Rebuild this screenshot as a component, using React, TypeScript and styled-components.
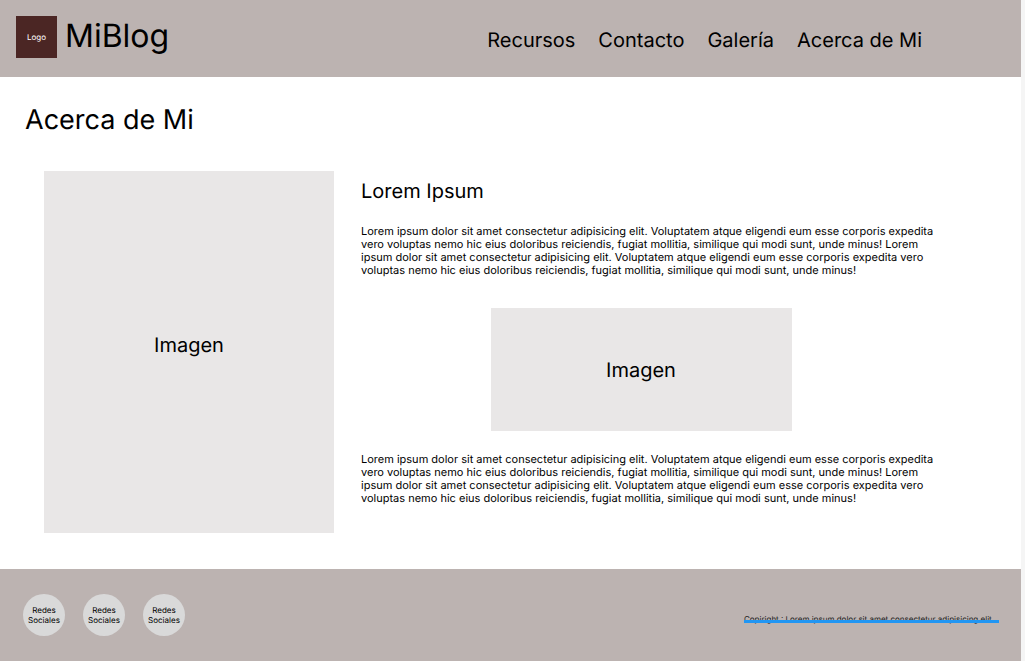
import React from "react";
import styled, { createGlobalStyle } from "styled-components";

const GlobalStyle = createGlobalStyle`
  *, *::before, *::after { box-sizing: border-box; }
  body {
    margin: 0;
    background: #f5f5f5;
    color: #000;
    font-family: Inter, "Liberation Sans", sans-serif;
    text-rendering: geometricPrecision;
  }
  h1, h2, p, ul { margin: 0; padding: 0; font-weight: 400; }
`;

const Page = styled.div`
  display: flex;
  flex-direction: column;
  min-height: 100vh;
  margin-right: 4px;
  background: #fff;
`;

const Header = styled.header`
  display: flex;
  align-items: flex-start;
  justify-content: space-between;
  min-height: 77px;
  padding: 16px 99px 0 16px;
  background: #bcb3b1;
`;

const Brand = styled.a`
  display: flex;
  gap: 8px;
  color: inherit;
  text-decoration: none;
`;

const Logo = styled.span`
  display: grid;
  place-items: center;
  width: 41px;
  height: 42px;
  background: #4b2624;
  color: #fff;
  font-size: 8px;
  line-height: 10px;
`;

const BrandName = styled.span`
  font-size: 32px;
  line-height: 40px;
`;

const Nav = styled.nav`
  display: flex;
  gap: 23px;
  padding-top: 11px;
`;

const NavLink = styled.a`
  color: inherit;
  font-size: 20px;
  line-height: 26px;
  text-decoration: none;
`;

const Main = styled.main`
  flex: 1;
  padding: 26px 80px 36px 25px;
`;

const Title = styled.h1`
  font-size: 27px;
  line-height: 34px;
`;

const Content = styled.div`
  display: flex;
  gap: 27px;
  padding: 34px 0 0 19px;
`;

const Placeholder = styled.div<{ $width: number; $height: number; $lift?: number }>`
  display: grid;
  flex: none;
  place-items: center;
  width: ${(p) => p.$width}px;
  height: ${(p) => p.$height}px;
  padding-bottom: ${(p) => p.$lift ?? 0}px;
  background: #e9e7e7;
  font-size: 20px;
  line-height: 26px;
`;

const Article = styled.article`
  display: flex;
  flex: 1;
  flex-direction: column;
  min-width: 0;
  padding-top: 7px;
`;

const Subtitle = styled.h2`
  margin-bottom: 21px;
  font-size: 20px;
  line-height: 26px;
`;

const Paragraph = styled.p`
  font-size: 11px;
  line-height: 13px;
`;

const Figure = styled.div`
  display: flex;
  justify-content: center;
  padding: 31px 20px 22px 0;
`;

const Footer = styled.footer`
  display: flex;
  align-items: center;
  justify-content: space-between;
  min-height: 92px;
  padding: 0 22px 0 23px;
  background: #bcb3b1;
`;

const SocialList = styled.ul`
  display: flex;
  gap: 18px;
  list-style: none;
`;

const SocialLink = styled.a`
  display: grid;
  place-items: center;
  width: 42px;
  height: 42px;
  border-radius: 50%;
  background: #d9d9d9;
  color: #000;
  font-size: 8px;
  line-height: 10px;
  text-align: center;
  text-decoration: none;
`;

const Copyright = styled.p`
  position: relative;
  padding: 8px 5px 0 0;
  color: #222;
  font-size: 8px;
  line-height: 10px;

  &::after {
    content: "";
    position: absolute;
    right: 0;
    bottom: 1px;
    left: 0;
    height: 3px;
    background: #2196f3;
  }
`;

const navItems = ["Recursos", "Contacto", "Galería", "Acerca de Mi"];
const socials = ["red-1", "red-2", "red-3"];
const lorem =
  "Lorem ipsum dolor sit amet consectetur adipisicing elit. Voluptatem atque eligendi eum esse corporis expedita vero voluptas nemo hic eius doloribus reiciendis, fugiat mollitia, similique qui modi sunt, unde minus!";

export default function App() {
  return (
    <>
      <GlobalStyle />
      <Page>
        <Header>
          <Brand href="#inicio">
            <Logo>Logo</Logo>
            <BrandName>MiBlog</BrandName>
          </Brand>
          <Nav>
            {navItems.map((item) => (
              <NavLink key={item} href="#">
                {item}
              </NavLink>
            ))}
          </Nav>
        </Header>
        <Main>
          <Title>Acerca de Mi</Title>
          <Content>
            <Placeholder $width={290} $height={362} $lift={14}>
              Imagen
            </Placeholder>
            <Article>
              <Subtitle>Lorem Ipsum</Subtitle>
              <Paragraph>
                {lorem} {lorem}
              </Paragraph>
              <Figure>
                <Placeholder $width={301} $height={123}>
                  Imagen
                </Placeholder>
              </Figure>
              <Paragraph>
                {lorem} {lorem}
              </Paragraph>
            </Article>
          </Content>
        </Main>
        <Footer>
          <SocialList>
            {socials.map((id) => (
              <li key={id}>
                <SocialLink href={`#${id}`}>
                  Redes
                  <br />
                  Sociales
                </SocialLink>
              </li>
            ))}
          </SocialList>
          <Copyright>Copiright : Lorem ipsum dolor sit amet consectetur adipisicing elit.</Copyright>
        </Footer>
      </Page>
    </>
  );
}
